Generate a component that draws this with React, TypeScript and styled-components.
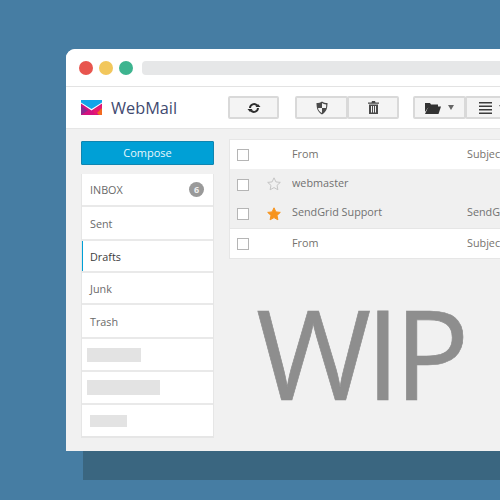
import React from "react";
import styled, { createGlobalStyle } from "styled-components";

const Global = createGlobalStyle`
  html, body { margin: 0; padding: 0; width: 500px; height: 500px; overflow: hidden; background: #467da3; }
  * { box-sizing: border-box; }
  body { font-family: "Open Sans", "Liberation Sans", sans-serif; }
`;

const Stage = styled.div`
  width: 500px;
  height: 500px;
  padding: 49px 0 0 66px;
  overflow: hidden;
`;
const Browser = styled.div`
  width: 434px;
  height: 402px;
  background: #f1f1f1;
  border-radius: 9px 0 0 0;
  overflow: hidden;
  display: flex;
  flex-direction: column;
`;
const Backdrop = styled.div`
  margin-left: 17px;
  width: 417px;
  height: 29px;
  background: #3a6680;
`;
const TitleBar = styled.div`
  height: 38px;
  flex: none;
  background: #fff;
  border-bottom: 1px solid #e3e3e3;
  display: flex;
  align-items: center;
  padding: 0 0 0 13px;
  gap: 6px;
`;
const Dot = styled.span<{ $c: string }>`
  width: 14px;
  height: 14px;
  border-radius: 50%;
  background: ${(p) => p.$c};
  flex: none;
`;
const AddressBar = styled.div`
  flex: 1;
  height: 14px;
  margin-left: 3px;
  background: #e6e7e8;
  border-radius: 4px 0 0 4px;
`;
const Header = styled.div`
  height: 42px;
  flex: none;
  background: #fff;
  border-bottom: 1px solid #e6e6e6;
  display: flex;
  align-items: center;
  padding: 0 0 0 15px;
`;
const Brand = styled.div`
  width: 147px;
  display: flex;
  align-items: center;
  gap: 9px;
  font-size: 16.3px;
  color: #3f4a70;
  flex: none;
`;
const Toolbar = styled.div`
  display: flex;
  gap: 16px;
  flex: none;
`;
const BtnGroup = styled.div<{ $tight?: boolean }>`
  display: flex;
  flex: none;
  margin-left: ${(p) => (p.$tight ? "-2px" : "0")};
`;
const ToolBtn = styled.div<{ $w: number; $gap?: number }>`
  width: ${(p) => p.$w}px;
  height: 23px;
  background: #f4f4f4;
  border: 2px solid #d9d9d9;
  border-radius: 2px;
  display: flex;
  align-items: center;
  justify-content: center;
  gap: ${(p) => p.$gap ?? 7}px;
  flex: none;
  & + & { margin-left: -1px; }
`;
const Caret = styled.span`
  width: 0;
  height: 0;
  border-left: 3.5px solid transparent;
  border-right: 3.5px solid transparent;
  border-top: 5px solid #666;
`;
const Body = styled.div`
  flex: 1;
  display: flex;
  padding: 10px 0 0 15px;
  gap: 15px;
  min-height: 0;
`;
const Sidebar = styled.div`
  width: 133px;
  flex: none;
  display: flex;
  flex-direction: column;
`;
const Compose = styled.div`
  height: 24px;
  margin-top: 2px;
  padding-bottom: 2px;
  background: #00a0d6;
  border: 1px solid #0f85b0;
  border-radius: 1px;
  color: #e8f7fc;
  font-size: 11px;
  display: flex;
  align-items: center;
  justify-content: center;
`;
const Menu = styled.div`
  margin-top: 9px;
  width: 133px;
  border: 1px solid #e6e6e6;
  border-top-width: 0;
  border-bottom-width: 2px;
  background: #e9e9e9;
  display: flex;
  flex-direction: column;
  gap: 2px;
`;
const MenuItem = styled.div<{ $active?: boolean; $h: number }>`
  height: ${(p) => p.$h}px;
  background: #fff;
  padding: 0 9px 0 8px;
  font-size: 10.8px;
  color: ${(p) => (p.$active ? "#3b3b3b" : "#6a6a6a")};
  display: flex;
  align-items: center;
  justify-content: space-between;
  box-shadow: ${(p) => (p.$active ? "inset 1px 0 0 #00a0d6" : "none")};
`;
const Badge = styled.span`
  width: 15px;
  height: 15px;
  border-radius: 50%;
  background: #999;
  color: #eee;
  font-size: 9px;
  font-weight: 700;
  display: flex;
  align-items: center;
  justify-content: center;
`;
const Placeholder = styled.span<{ $w: number; $h: number; $x: number }>`
  display: block;
  width: ${(p) => p.$w}px;
  height: ${(p) => p.$h}px;
  margin-left: ${(p) => p.$x}px;
  background: #e3e3e3;
`;
const Main = styled.div`
  flex: 1;
  min-width: 0;
  display: flex;
  flex-direction: column;
`;
const Table = styled.div`
  width: 272px;
  flex: none;
  border: 1px solid #e6e6e6;
  border-right: 0;
  display: flex;
  flex-direction: column;
  overflow: hidden;
`;
const Row = styled.div<{ $head?: boolean; $h: number; $rule?: boolean }>`
  height: ${(p) => p.$h}px;
  background: ${(p) => (p.$head ? "#fff" : "#f0f0f0")};
  border-top: ${(p) => (p.$rule ? "1px solid #e6e6e6" : "0")};
  display: grid;
  grid-template-columns: 29px 33px 175px 60px;
  align-items: center;
  font-size: 10.8px;
  color: #707070;
  white-space: nowrap;
`;
const Check = styled.span<{ $drop?: number }>`
  width: 12px;
  height: 12px;
  margin: ${(p) => p.$drop ?? 0}px 0 0 7px;
  background: #fff;
  border: 1px solid #b5b5b5;
`;
const StarCell = styled.span`
  display: flex;
  margin-left: 8px;
`;
const Cell = styled.span<{ $head?: boolean; $lift?: number }>`
  color: ${(p) => (p.$head ? "#76736e" : "#707070")};
  padding-bottom: ${(p) => p.$lift ?? 2}px;
  overflow: hidden;
`;
const Wip = styled.div`
  margin: 30px 0 0 27px;
  font-size: 125px;
  line-height: 125px;
  letter-spacing: -6px;
  -webkit-text-stroke: 0.7px #8e8e8e;
  color: #8e8e8e;
  font-family: "Open Sans", sans-serif;
  white-space: nowrap;
`;

const starPath = "M7 .8l1.900 4.100 4.400.5-3.300 3 .9 4.400L7 10.600l-3.900 2.200.9-4.400-3.300-3 4.400-.5z";
const Star = ({ filled }: { filled?: boolean }) => (
  <svg width="14" height="14" viewBox="0 0 14 14">
    <path d={starPath} fill={filled ? "#f7941d" : "none"} stroke={filled ? "#f7941d" : "#c4c4c4"} strokeWidth="1" />
  </svg>
);

const Logo = () => (
  <svg width="21" height="15" viewBox="0 0 21 15">
    <rect width="21" height="15" fill="#d4127e" />
    <path d="M0 15V6l7 4.500z" fill="#8e2a8f" />
    <path d="M13 10l8-4.500V15h-3z" fill="#f26a21" />
    <path d="M12 11l9-6v3l-7 7z" fill="#e8176f" />
    <path d="M0 0h21v3.500l-10.500 7L0 3.500z" fill="#fff" />
    <path d="M0 0h21v2.500L10.500 9 0 2.500z" fill="#12a5e8" />
  </svg>
);
const Refresh = () => (
  <svg width="14" height="12" viewBox="0 0 14 12" fill="none">
    <path d="M3 6A4 4 0 0 1 10 3.500" stroke="#2e2e2e" strokeWidth="2" />
    <path d="M11 6A4 4 0 0 1 4 8.500" stroke="#2e2e2e" strokeWidth="2" />
    <path d="M8.500 5h5L11 2zM.5 7h5L3 10z" fill="#2e2e2e" />
  </svg>
);
const Shield = () => (
  <svg width="12" height="14" viewBox="0 0 12 14">
    <path d="M6 .5C4.500 1.500 2.500 2 .5 2c0 5 1 9 5.500 11.500C10.500 11 11.500 7 11.500 2 9.500 2 7.500 1.500 6 .5z" fill="#4a4a4a" />
    <path d="M6 2v5H2c.2 2 1.500 3.800 4 5V7h4c.2-1 .2-2 .2-3.500C8.500 3.300 7 2.800 6 2z" fill="#f2f2f2" />
  </svg>
);
const Trash = () => (
  <svg width="11" height="13" viewBox="0 0 11 13" fill="#4a4a4a">
    <path d="M4 0h3l.5 1.500H11v1.200H0V1.500h3.500z" />
    <path d="M1 3.500h9V13H1zM3 5v6.500h1V5zm2 0v6.500h1V5zm2 0v6.500h1V5z" fillRule="evenodd" />
  </svg>
);
const Folder = () => (
  <svg width="16" height="12" viewBox="0 0 16 12" fill="#333">
    <path d="M0 1h5l1 1.500h7V5H3.500L0 10z" />
    <path d="M3.500 4.500H16L13.500 12H0z" />
  </svg>
);
const Lines = () => (
  <svg width="13" height="12" viewBox="0 0 13 12" fill="#3c3c3c">
    <path d="M0 0h13v1.500H0zM0 3.500h13V5H0zM0 7h13v1.500H0zM0 10.500h13V12H0z" />
  </svg>
);

export default function App() {
  return (
    <Stage>
      <Global />
      <Browser>
        <TitleBar>
          <Dot $c="#e8554e" />
          <Dot $c="#f2c75c" />
          <Dot $c="#3db48f" />
          <AddressBar />
        </TitleBar>
        <Header>
          <Brand>
            <Logo />
            WebMail
          </Brand>
          <Toolbar>
            <ToolBtn $w={51}>
              <Refresh />
            </ToolBtn>
            <BtnGroup>
              <ToolBtn $w={53}>
                <Shield />
              </ToolBtn>
              <ToolBtn $w={52}>
                <Trash />
              </ToolBtn>
            </BtnGroup>
            <BtnGroup $tight>
              <ToolBtn $w={53}>
                <Folder />
                <Caret />
              </ToolBtn>
              <ToolBtn $w={53}>
                <Lines />
                <Caret />
              </ToolBtn>
            </BtnGroup>
          </Toolbar>
        </Header>
        <Body>
          <Sidebar>
            <Compose>Compose</Compose>
            <Menu>
              <MenuItem $h={31}>
                INBOX
                <Badge>6</Badge>
              </MenuItem>
              <MenuItem $h={32}>Sent</MenuItem>
              <MenuItem $h={30} $active>Drafts</MenuItem>
              <MenuItem $h={30}>Junk</MenuItem>
              <MenuItem $h={32}>Trash</MenuItem>
              <MenuItem $h={31}>
                <Placeholder $w={54} $h={14} $x={-3} />
              </MenuItem>
              <MenuItem $h={31}>
                <Placeholder $w={73} $h={15} $x={-3} />
              </MenuItem>
              <MenuItem $h={31}>
                <Placeholder $w={37} $h={12} $x={0} />
              </MenuItem>
            </Menu>
          </Sidebar>
          <Main>
            <Table>
              <Row $head $h={29}>
                <Check />
                <span />
                <Cell $head>From</Cell>
                <Cell $head>Subject</Cell>
              </Row>
              <Row $h={30}>
                <Check $drop={1} />
                <StarCell><Star /></StarCell>
                <Cell $lift={3}>webmaster</Cell>
                <Cell />
              </Row>
              <Row $h={29}>
                <Check />
                <StarCell><Star filled /></StarCell>
                <Cell $lift={4}>SendGrid Support</Cell>
                <Cell $lift={4}>SendGrid</Cell>
              </Row>
              <Row $head $rule $h={30}>
                <Check $drop={1} />
                <span />
                <Cell $head>From</Cell>
                <Cell $head>Subject</Cell>
              </Row>
            </Table>
            <Wip>WIP</Wip>
          </Main>
        </Body>
      </Browser>
      <Backdrop />
    </Stage>
  );
}
